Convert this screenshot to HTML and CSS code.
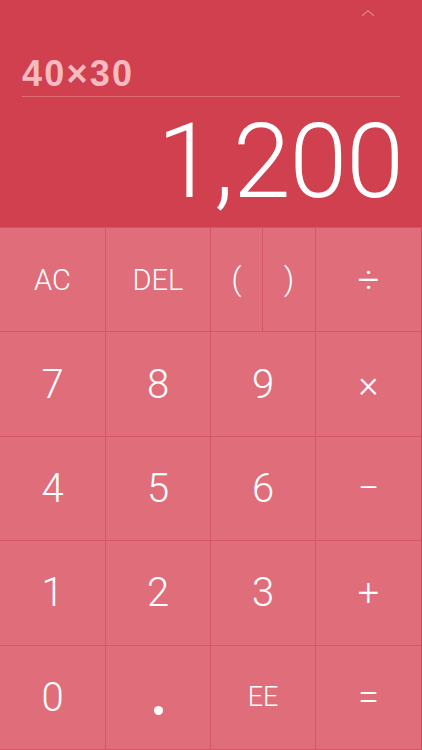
FILE: index.html
```html
<!DOCTYPE html>
<html>
<head>
<meta charset="utf-8">
<link rel="stylesheet" href="styles.css">
</head>
<body>
<div class="app">
  <header class="display">
    <div class="top">
      <svg class="chev" width="14" height="8" viewBox="0 0 14 8"><path d="M1 7 L7 1.5 L13 7" fill="none" stroke="#e77d88" stroke-width="1.2"/></svg>
    </div>
    <div class="expr">40×30</div>
    <div class="rule"></div>
    <div class="result">1,200</div>
  </header>
  <main class="keys">
    <div class="key op">AC</div>
    <div class="key op">DEL</div>
    <div class="key split"><div class="half">(</div><div class="half">)</div></div>
    <div class="key sym">÷</div>
    <div class="key num">7</div>
    <div class="key num">8</div>
    <div class="key num">9</div>
    <div class="key sym">×</div>
    <div class="key num">4</div>
    <div class="key num">5</div>
    <div class="key num">6</div>
    <div class="key sym">−</div>
    <div class="key num">1</div>
    <div class="key num">2</div>
    <div class="key num">3</div>
    <div class="key sym">+</div>
    <div class="key num">0</div>
    <div class="key num dot"><span class="dotc"></span></div>
    <div class="key ee">EE</div>
    <div class="key sym">=</div>
  </main>
</div>
</body>
</html>
```
FILE: styles.css
```css
* { box-sizing: border-box; }
html, body { margin: 0; padding: 0; }
body { width: 422px; height: 750px; overflow: hidden; font-family: Roboto, "Liberation Sans", sans-serif; background: #e06e7a; }
.app { display: flex; flex-direction: column; height: 750px; }
.display { height: 227px; background: #d0404f; padding: 0 22px 0 22px; display: flex; flex-direction: column; }
.top { height: 55px; display: flex; justify-content: flex-end; padding-top: 9px; padding-right: 25px; }
.chev { display: block; }
.expr { font-family: "Liberation Sans", Arial, sans-serif; font-weight: 700; font-size: 36px; color: #f6bac1; line-height: 38px; height: 39px; letter-spacing: 2.2px; }
.rule { height: 1px; background: #df6b77; margin-top: 2px; }
.result { text-align: right; color: #ffffff; font-weight: 300; font-size: 104px; line-height: 100px; margin-top: 15px; margin-right: -3px; letter-spacing: -1px; }
.keys { flex: 1; display: grid; grid-template-columns: 106px 105px 105px 1fr; grid-template-rows: repeat(5, 1fr); border-top: 1px solid #d5566a; }
.key { display: flex; align-items: center; justify-content: center; color: #ffffff; border-right: 1px solid #d5566a; border-bottom: 1px solid #d5566a; font-weight: 300; }
.key:nth-child(4n) { border-right: 1px solid #c94a5a; }
.op { font-size: 29px; }
.num { font-size: 40px; }
.sym { font-size: 38px; }
.ee { font-size: 27px; }
.split { display: grid; grid-template-columns: 1fr 1fr; align-items: stretch; justify-items: stretch; font-size: 31px; }
.half { display: flex; align-items: center; justify-content: center; }
.half:first-child { border-right: 1px solid #d5566a; }
.dotc { width: 9px; height: 9px; border-radius: 50%; background: #fff; margin-top: 26px; }
```
